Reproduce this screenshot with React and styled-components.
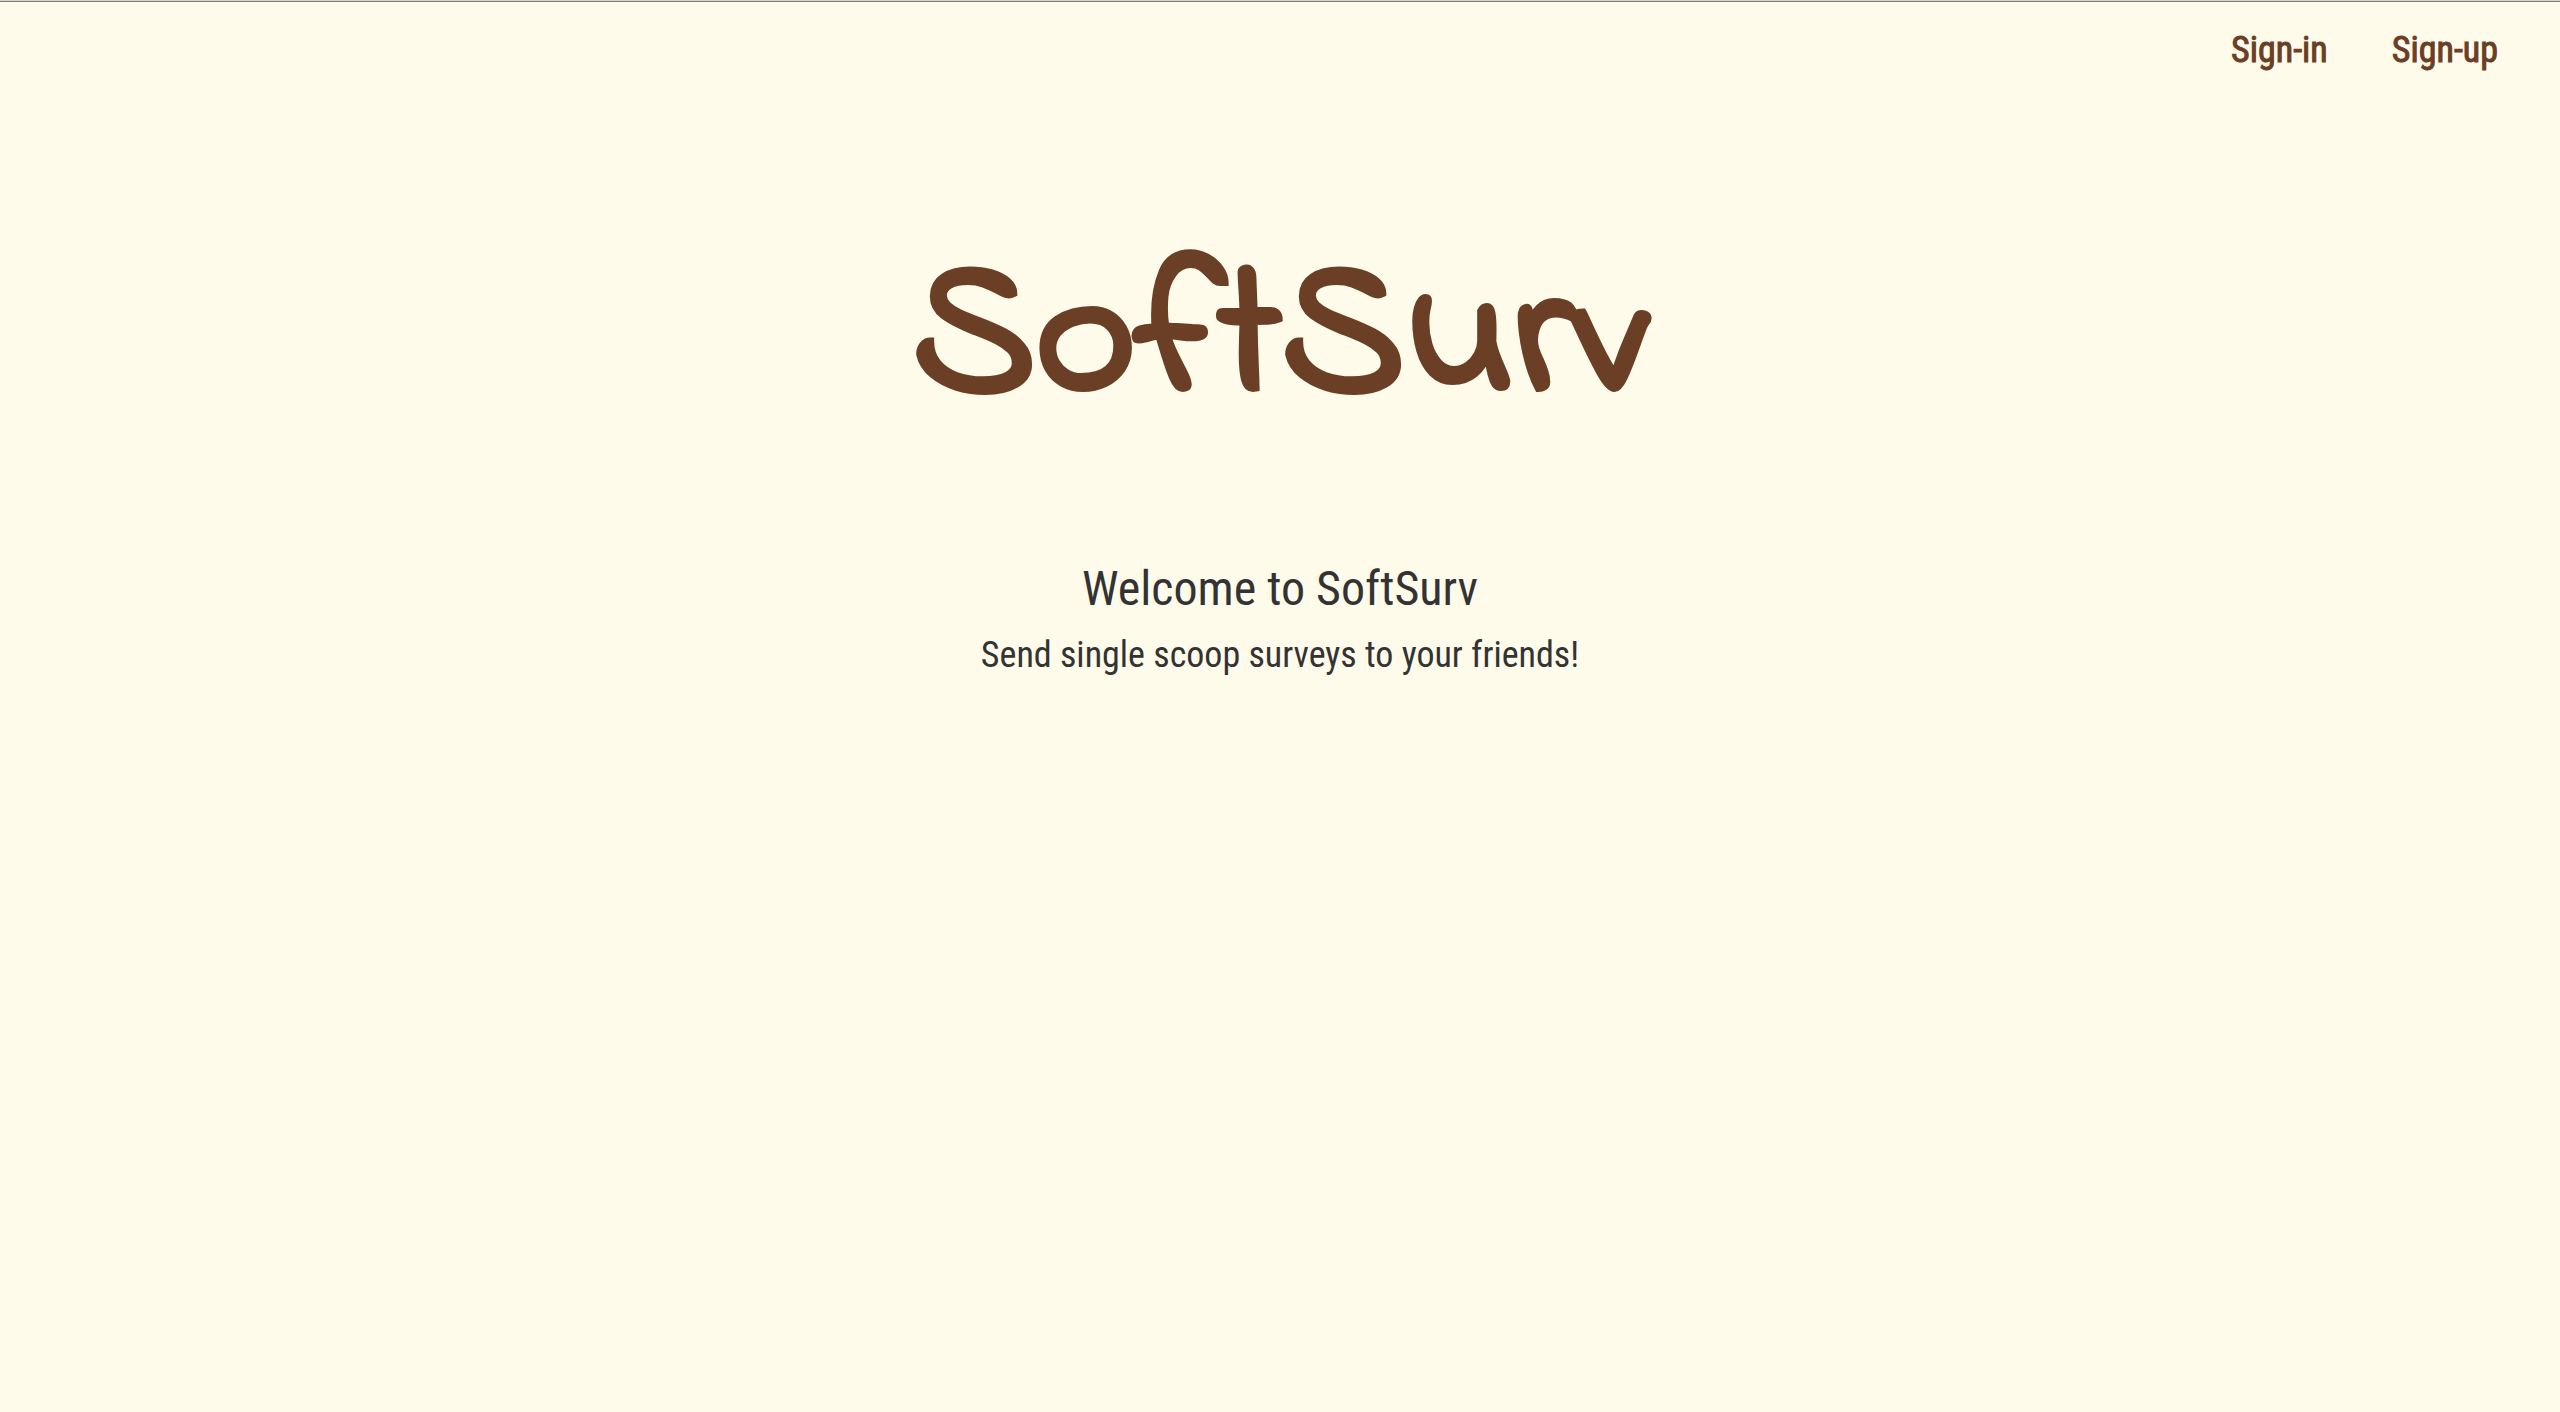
import React from "react";
import styled, { createGlobalStyle } from "styled-components";

const Global = createGlobalStyle`
  * { box-sizing: border-box; }
  body {
    margin: 0;
    background: #fffbea;
    color: #333333;
    font-family: "Roboto Condensed", "Liberation Sans Narrow", Roboto, sans-serif;
  }
`;

const Page = styled.div`
  min-height: 100vh;
  border-top: 1px solid #d4d4d2;
`;

const Nav = styled.nav`
  display: flex;
  justify-content: flex-end;
  gap: 64px;
  padding: 27px 62px 0;
  border-top: 1px solid #7c7c76;
`;

const NavLink = styled.a`
  color: #6b3e26;
  font-size: 36px;
  line-height: 42px;
  font-weight: 400;
  -webkit-text-stroke: 1px #6b3e26;
  text-decoration: none;
`;

const Main = styled.main`
  display: flex;
  flex-direction: column;
  align-items: center;
  text-align: center;
`;

const Logo = styled.h1`
  margin: 131px 0 78px;
  color: #6b3e26;
  font-family: "Indie Flower", Lato, sans-serif;
  font-size: 192px;
  line-height: 280px;
  font-weight: 400;
  -webkit-text-stroke: 8px #6b3e26;
`;

const Welcome = styled.h2`
  margin: 0;
  font-size: 48px;
  line-height: 58px;
  font-weight: 400;
`;

const Tagline = styled.p`
  margin: 16px 0 0;
  font-size: 36px;
  line-height: 42px;
`;

export default function App() {
  return (
    <Page>
      <Global />
      <Nav>
        <NavLink href="#sign-in">Sign-in</NavLink>
        <NavLink href="#sign-up">Sign-up</NavLink>
      </Nav>
      <Main>
        <Logo>SoftSurv</Logo>
        <Welcome>Welcome to SoftSurv</Welcome>
        <Tagline>Send single scoop surveys to your friends!</Tagline>
      </Main>
    </Page>
  );
}
